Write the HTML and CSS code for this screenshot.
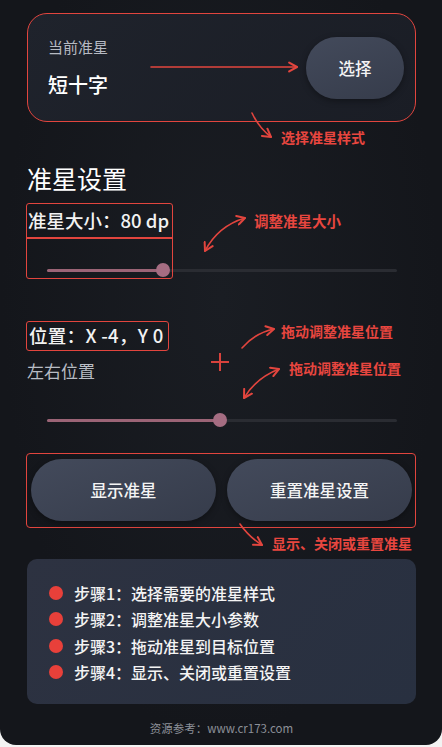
FILE: index.html
```html
<!DOCTYPE html>
<html lang="zh">
<head>
  <meta charset="UTF-8" />
  <meta name="viewport" content="width=device-width, initial-scale=1.0"/>
  <title>准星设置</title>
  <link rel="stylesheet" href="styles.css">
</head>
<body>
  <div class="screen">
    <div class="current-card">
      <div class="current-info">
        <div class="current-label">当前准星</div>
        <div class="current-name">短十字</div>
      </div>
      <button class="pill select-btn">选择</button>
    </div>

    <div class="content">
      <h2 class="section-title">准星设置</h2>

      <div class="size-label">准星大小：80 dp</div>
      <div class="slider">
        <div class="slider-fill" style="width: 33%"></div>
        <div class="slider-thumb" style="left: 33%"></div>
      </div>

      <div class="pos-label">位置：X -4，Y 0</div>
      <div class="pos-row">
        <span class="pos-sub">左右位置</span>
        <span class="crosshair"></span>
      </div>
      <div class="slider slider-pos">
        <div class="slider-fill" style="width: 49.4%"></div>
        <div class="slider-thumb" style="left: 49.4%"></div>
      </div>

      <div class="actions">
        <button class="pill action-btn">显示准星</button>
        <button class="pill action-btn">重置准星设置</button>
      </div>

      <div class="steps">
        <div class="step"><span class="dot"></span>步骤1：选择需要的准星样式</div>
        <div class="step"><span class="dot"></span>步骤2：调整准星大小参数</div>
        <div class="step"><span class="dot"></span>步骤3：拖动准星到目标位置</div>
        <div class="step"><span class="dot"></span>步骤4：显示、关闭或重置设置</div>
      </div>

      <div class="footer">资源参考：www.cr173.com</div>
    </div>

    <!-- annotation layer -->
    <div class="notes">
      <div class="note-box size-box"></div>
      <svg class="arrows" width="442" height="745" viewBox="0 0 442 745">
        <defs>
          <marker id="head" viewBox="0 0 10 10" refX="8" refY="5" markerWidth="7" markerHeight="7" orient="auto-start-reverse">
            <path d="M1 1 L8 5 L1 9" fill="none" stroke="#e2453e" stroke-width="1.8" stroke-linecap="round" stroke-linejoin="round"/>
          </marker>
        </defs>
        <g fill="none" stroke="#e2453e" stroke-width="1.6" stroke-linecap="round">
          <path d="M151 67 L297 67" marker-end="url(#head)"/>
          <path d="M252 113 Q259 128 271 137" marker-end="url(#head)"/>
          <path d="M205 251 Q218 226 245 218" marker-start="url(#head)" marker-end="url(#head)"/>
          <path d="M242 348 Q255 333 274 329" marker-end="url(#head)"/>
          <path d="M244 398 Q256 378 279 369" marker-start="url(#head)" marker-end="url(#head)"/>
          <path d="M240 524 Q249 537 262 545" marker-end="url(#head)"/>
        </g>
      </svg>
      <span class="note-text note-select">选择准星样式</span>
      <span class="note-text note-size">调整准星大小</span>
      <span class="note-text note-drag1">拖动调整准星位置</span>
      <span class="note-text note-drag2">拖动调整准星位置</span>
      <span class="note-text note-actions">显示、关闭或重置准星</span>
    </div>
  </div>
</body>
</html>
```

FILE: styles.css
```css
body {
  margin: 0;
  background: #f3f3f3;
  font-family: "Noto Sans CJK SC", "Noto Sans", sans-serif;
}

.screen {
  position: relative;
  width: 442px;
  height: 745px;
  overflow: hidden;
  background: radial-gradient(ellipse at 50% 40%, #1a1d23 0%, #14161b 70%);
  border-radius: 0 0 16px 16px;
  color: #f2f2f2;
}

.pill {
  font-family: inherit;
  font-weight: 500;
  border: none;
  color: #f4f4f4;
  background: linear-gradient(160deg, #434a5b, #363c4b);
  box-shadow: 0 2px 6px rgba(0, 0, 0, 0.35);
  cursor: pointer;
}

/* current crosshair card */
.current-card {
  box-sizing: border-box;
  margin: 13px 26px 0 27px;
  height: 109px;
  border: 1.5px solid #e2453e;
  border-radius: 20px;
  background: linear-gradient(135deg, #1f232c, #1a1d25);
  display: flex;
  align-items: center;
  justify-content: space-between;
  padding: 0 11px 0 20px;
}

.current-info {
  align-self: flex-start;
  padding-top: 22px;
}

.current-label {
  font-size: 15px;
  line-height: 22px;
  color: #b6bac2;
}

.current-name {
  margin-top: 13px;
  font-size: 20px;
  line-height: 28px;
  font-weight: 500;
  color: #ffffff;
}

.select-btn {
  width: 98px;
  height: 62px;
  border-radius: 31px;
  font-size: 16.5px;
}

.content {
  padding: 0 26px 0 27px;
}

.section-title {
  margin: 39px 0 0;
  font-size: 25px;
  line-height: 34px;
  font-weight: 400;
  color: #ffffff;
}

.size-label {
  margin-top: 8px;
  padding-left: 1px;
  font-size: 18.5px;
  line-height: 34px;
  font-weight: 500;
}

/* sliders */
.slider {
  position: relative;
  height: 14px;
  margin: 26px 19px 0 20px;
}

.slider::before {
  content: "";
  position: absolute;
  left: 0;
  right: 0;
  top: 6px;
  height: 3px;
  border-radius: 2px;
  background: #2a2c32;
}

.slider-fill {
  position: absolute;
  left: 0;
  top: 6px;
  height: 3px;
  border-radius: 2px;
  background: #9b6476;
}

.slider-thumb {
  position: absolute;
  top: 0;
  width: 14px;
  height: 14px;
  margin-left: -7px;
  border-radius: 50%;
  background: #a56d82;
}

.slider-pos {
  margin-top: 30px;
}

.pos-label {
  display: inline-block;
  box-sizing: border-box;
  margin: 44px 0 0 -1px;
  width: 143px;
  height: 30px;
  padding-left: 2px;
  border: 1.5px solid #e2453e;
  border-radius: 3px;
  font-size: 18.5px;
  line-height: 27px;
  font-weight: 500;
  letter-spacing: 0.3px;
}

.pos-row {
  position: relative;
  margin-top: 8px;
  height: 24px;
}

.pos-sub {
  font-size: 17px;
  line-height: 24px;
  color: #b8bcc4;
}

.crosshair {
  position: absolute;
  left: 184px;
  top: -6px;
  width: 18px;
  height: 18px;
}

.crosshair::before,
.crosshair::after {
  content: "";
  position: absolute;
  background: #d8423c;
}

.crosshair::before {
  left: 0;
  right: 0;
  top: 8px;
  height: 2px;
}

.crosshair::after {
  top: 0;
  bottom: 0;
  left: 8px;
  width: 2px;
}

/* action buttons */
.actions {
  margin: 26px 0 0 -1px;
  border: 1px solid #e2453e;
  border-radius: 4px;
  padding: 5px 3px 6px 4px;
  display: flex;
  gap: 11px;
}

.action-btn {
  flex: 1;
  height: 62px;
  border-radius: 31px;
  font-size: 16.5px;
}

/* steps */
.steps {
  margin-top: 31px;
  height: 145px;
  box-sizing: border-box;
  padding: 21px 0 0 22px;
  border-radius: 10px;
  background: linear-gradient(135deg, #2d3241, #283040);
}

.step {
  display: flex;
  align-items: center;
  gap: 11px;
  height: 26.3px;
  font-size: 16px;
  font-weight: 500;
  color: #f4f4f4;
}

.dot {
  width: 14px;
  height: 14px;
  border-radius: 50%;
  background: #e8403a;
}

.footer {
  margin-top: 14px;
  text-align: center;
  font-size: 11.5px;
  line-height: 20px;
  color: #8c9098;
}

/* annotations */
.notes {
  position: absolute;
  inset: 0;
  pointer-events: none;
}

.arrows {
  position: absolute;
  left: 0;
  top: 0;
}

.note-box {
  position: absolute;
  border: 1.5px solid #e2453e;
  border-radius: 3px;
}

.size-box {
  left: 26px;
  top: 203px;
  width: 145px;
  height: 74px;
}

.size-box::after {
  content: "";
  position: absolute;
  left: 0;
  right: 0;
  top: 33px;
  height: 1.5px;
  background: #e2453e;
}

.note-text {
  position: absolute;
  font-size: 14px;
  line-height: 20px;
  font-weight: 700;
  color: #e8463f;
  white-space: nowrap;
}

.note-select { left: 281px; top: 127px; }
.note-size { left: 254px; top: 211px; font-size: 14.5px; }
.note-drag1 { left: 281px; top: 321px; }
.note-drag2 { left: 289px; top: 358px; }
.note-actions { left: 272px; top: 533px; }
```
